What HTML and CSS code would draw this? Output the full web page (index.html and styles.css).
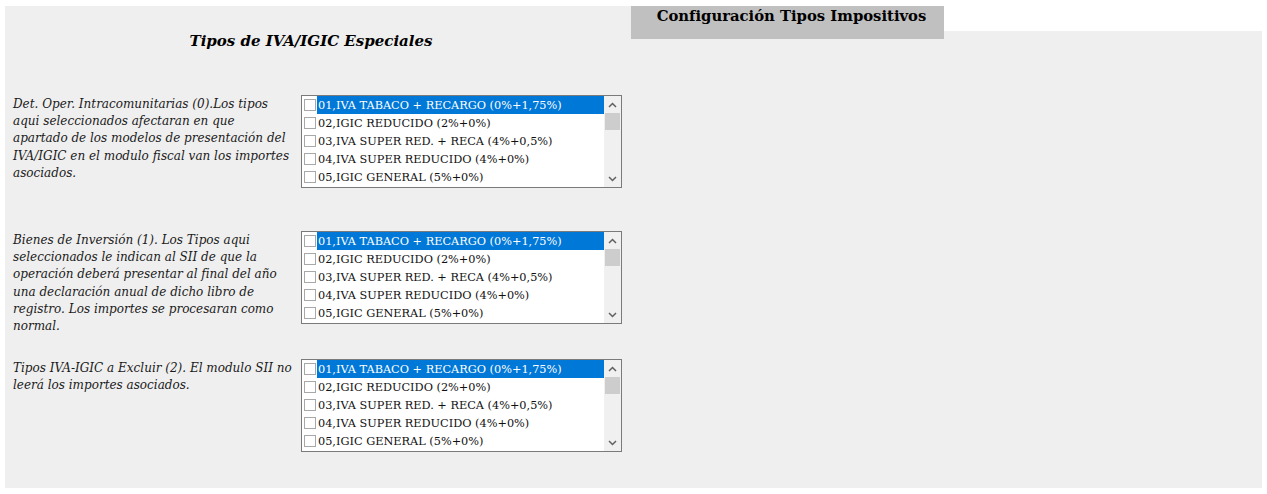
FILE: index.html
```html
<!DOCTYPE html>
<html lang="es">
<head>
<meta charset="utf-8">
<title>Configuración Tipos Impositivos</title>
<link rel="stylesheet" href="styles.css">
</head>
<body>
<div class="page">
  <section class="left">
    <h2 class="title">Tipos de IVA/IGIC Especiales</h2>
    <div class="row row1">
      <p class="desc">Det. Oper. Intracomunitarias (0).Los tipos aqui seleccionados afectaran en que<br>apartado de los modelos de presentación del IVA/IGIC en el modulo fiscal van los importes asociados.</p>
      <div class="listbox">
        <ul class="items">
          <li class="item selected"><span class="chk"></span>01,IVA TABACO + RECARGO (0%+1,75%)</li>
          <li class="item"><span class="chk"></span>02,IGIC REDUCIDO (2%+0%)</li>
          <li class="item"><span class="chk"></span>03,IVA SUPER RED. + RECA (4%+0,5%)</li>
          <li class="item"><span class="chk"></span>04,IVA SUPER REDUCIDO (4%+0%)</li>
          <li class="item"><span class="chk"></span>05,IGIC GENERAL (5%+0%)</li>
        </ul>
        <div class="scrollbar">
          <svg class="arrow" width="9" height="6" viewBox="0 0 9 6"><path d="M1 5 L4.5 1.5 L8 5" fill="none" stroke="#606060" stroke-width="1.5"/></svg>
          <div class="thumb"></div>
          <div class="track"></div>
          <svg class="arrow" width="9" height="6" viewBox="0 0 9 6"><path d="M1 1 L4.5 4.5 L8 1" fill="none" stroke="#606060" stroke-width="1.5"/></svg>
        </div>
      </div>
    </div>
    <div class="row row2">
      <p class="desc">Bienes de Inversión (1). Los Tipos aqui seleccionados le indican al SII de que la operación deberá presentar al final del año una declaración anual de dicho libro de registro. Los importes se procesaran como normal.</p>
      <div class="listbox">
        <ul class="items">
          <li class="item selected"><span class="chk"></span>01,IVA TABACO + RECARGO (0%+1,75%)</li>
          <li class="item"><span class="chk"></span>02,IGIC REDUCIDO (2%+0%)</li>
          <li class="item"><span class="chk"></span>03,IVA SUPER RED. + RECA (4%+0,5%)</li>
          <li class="item"><span class="chk"></span>04,IVA SUPER REDUCIDO (4%+0%)</li>
          <li class="item"><span class="chk"></span>05,IGIC GENERAL (5%+0%)</li>
        </ul>
        <div class="scrollbar">
          <svg class="arrow" width="9" height="6" viewBox="0 0 9 6"><path d="M1 5 L4.5 1.5 L8 5" fill="none" stroke="#606060" stroke-width="1.5"/></svg>
          <div class="thumb"></div>
          <div class="track"></div>
          <svg class="arrow" width="9" height="6" viewBox="0 0 9 6"><path d="M1 1 L4.5 4.5 L8 1" fill="none" stroke="#606060" stroke-width="1.5"/></svg>
        </div>
      </div>
    </div>
    <div class="row row3">
      <p class="desc">Tipos IVA-IGIC a Excluir (2). El modulo SII no leerá los importes asociados.</p>
      <div class="listbox">
        <ul class="items">
          <li class="item selected"><span class="chk"></span>01,IVA TABACO + RECARGO (0%+1,75%)</li>
          <li class="item"><span class="chk"></span>02,IGIC REDUCIDO (2%+0%)</li>
          <li class="item"><span class="chk"></span>03,IVA SUPER RED. + RECA (4%+0,5%)</li>
          <li class="item"><span class="chk"></span>04,IVA SUPER REDUCIDO (4%+0%)</li>
          <li class="item"><span class="chk"></span>05,IGIC GENERAL (5%+0%)</li>
        </ul>
        <div class="scrollbar">
          <svg class="arrow" width="9" height="6" viewBox="0 0 9 6"><path d="M1 5 L4.5 1.5 L8 5" fill="none" stroke="#606060" stroke-width="1.5"/></svg>
          <div class="thumb"></div>
          <div class="track"></div>
          <svg class="arrow" width="9" height="6" viewBox="0 0 9 6"><path d="M1 1 L4.5 4.5 L8 1" fill="none" stroke="#606060" stroke-width="1.5"/></svg>
        </div>
      </div>
    </div>
  </section>
  <section class="right">
    <div class="tab">Configuración Tipos Impositivos</div>
    <div class="right-body"></div>
  </section>
</div>
</body>
</html>
```
FILE: styles.css
```css
* { box-sizing: border-box; }
html, body { margin: 0; padding: 0; background: #fff; }
body {
  padding: 6px 5px 6px 5px;
  font-family: "DejaVu Serif", "Liberation Serif", serif;
  color: #000;
}
.page {
  display: flex;
  height: 482px;
}
.left {
  width: 626px;
  background: #efefef;
  padding: 0 0 0 8px;
}
.title {
  margin: 0;
  padding: 25px 0 0 0;
  height: 89px;
  font-size: 15px;
  font-style: italic;
  font-weight: bold;
  text-align: center;
  padding-right: 22px;
  line-height: 20px;
}
.row {
  display: flex;
  align-items: flex-start;
  gap: 5px;
}
.row1 { height: 136px; }
.row2 { height: 128px; }
.desc {
  width: 283px;
  margin: 1px 0 0 0;
  font-size: 12px;
  font-style: italic;
  line-height: 17.2px;
  color: #1a1a1a;
}
.listbox {
  width: 321px;
  height: 93px;
  border: 1px solid #7a7a7a;
  background: #fff;
  display: flex;
}
.items {
  list-style: none;
  margin: 0;
  padding: 0;
  flex: 1;
  overflow: hidden;
}
.item {
  height: 18px;
  display: flex;
  align-items: center;
  font-size: 11.3px;
  white-space: nowrap;
  padding-left: 2px;
  color: #111;
}
.item.selected {
  background: linear-gradient(to right, #fff 0, #fff 15px, #0078d7 15px);
  color: #fff;
}
.chk {
  width: 12px;
  height: 12px;
  border: 1px solid #a8a8a8;
  background: #fff;
  margin-right: 2px;
  flex: none;
}
.scrollbar {
  width: 17px;
  background: #f0f0f0;
  display: flex;
  flex-direction: column;
  align-items: center;
}
.arrow { margin: 6px 0 5px; flex: none; }
.thumb {
  width: 15px;
  height: 17px;
  background: #cdcdcd;
  flex: none;
}
.track { flex: 1; }
.right {
  flex: 1;
  display: flex;
  flex-direction: column;
}
.tab {
  width: 313px;
  height: 33px;
  background: #c0c0c0;
  font-weight: bold;
  font-size: 14.8px;
  text-align: center;
  padding-top: 1px;
  padding-left: 8px;
  line-height: 18px;
  position: relative;
  z-index: 1;
}
.right-body {
  flex: 1;
  margin-top: -8px;
  background: #efefef;
}
```
